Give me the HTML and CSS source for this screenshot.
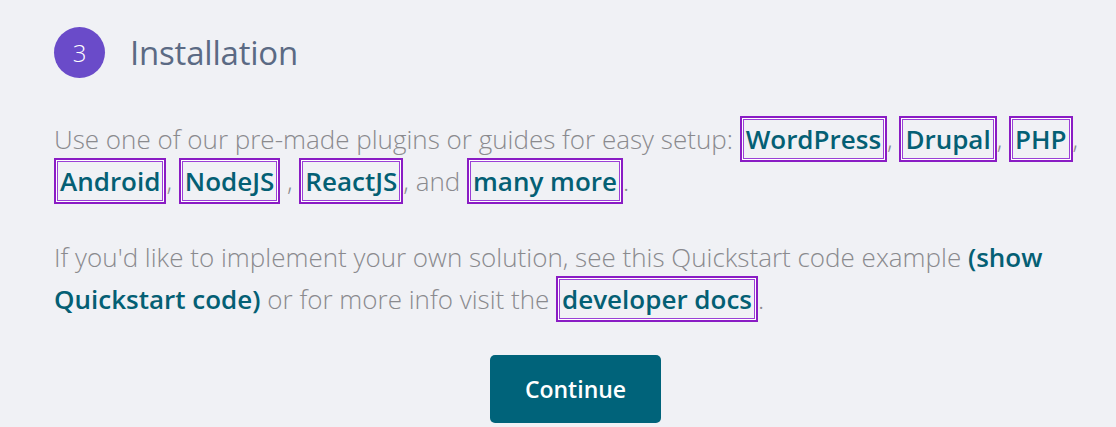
FILE: index.html
```html
<!DOCTYPE html>
<html lang="en">
<head>
<meta charset="utf-8">
<title>Installation</title>
<link rel="stylesheet" href="styles.css">
</head>
<body>
<section class="step">
  <header class="step-header">
    <span class="step-num">3</span>
    <h2 class="step-title">Installation</h2>
  </header>
  <p class="step-text">Use one of our pre-made plugins or guides for easy setup: <a class="link ring" href="#">WordPress</a>, <a class="link ring" href="#">Drupal</a>, <a class="link ring" href="#">PHP</a>, <a class="link ring" href="#">Android</a>, <a class="link ring" href="#">NodeJS</a> , <a class="link ring" href="#">ReactJS</a>, and <a class="link ring" href="#">many more</a>.</p>
  <p class="step-text">If you'd like to implement your own solution, see this Quickstart code example <a class="link" href="#">(show Quickstart code)</a> or for more info visit the <a class="link ring" href="#">developer docs</a>.</p>
  <div class="actions">
    <button class="btn" type="button">Continue</button>
  </div>
</section>
</body>
</html>
```
FILE: styles.css
```css
html, body {
  margin: 0;
  padding: 0;
  background: #f0f1f5;
}
body {
  font-family: "Open Sans", "Noto Sans", sans-serif;
}
.step {
  padding: 27px 19px 0 54px;
}
.step-header {
  display: flex;
  align-items: center;
  gap: 25px;
}
.step-num {
  width: 51px;
  height: 51px;
  border-radius: 50%;
  background: #6a4bc9;
  color: #ffffff;
  font-size: 24px;
  font-weight: 300;
  display: flex;
  align-items: center;
  justify-content: center;
}
.step-title {
  margin: 0;
  font-size: 33px;
  font-weight: 400;
  color: #5b6a84;
  letter-spacing: -0.2px;
}
.step-text {
  margin: 40px 0 0;
  font-size: 26px;
  line-height: 42px;
  font-weight: 300;
  color: #8a8a8e;
}
.step-text + .step-text {
  margin-top: 34px;
}
.link {
  color: #045f74;
  font-weight: 600;
  text-decoration: none;
}
.ring {
  padding: 1px 2px;
  margin: 0 3px;
  border: 1.5px solid #9a3fd6;
  box-shadow: 0 0 0 1px #ffffff;
  outline: 2px solid #8a1cc4;
  outline-offset: 1px;
}
.actions {
  display: flex;
  justify-content: center;
  margin-top: 35px;
}
.btn {
  width: 171px;
  height: 68px;
  border: 0;
  border-radius: 5px;
  background: #00637a;
  color: #ffffff;
  font-family: "Open Sans", "Noto Sans", sans-serif;
  font-size: 23px;
  font-weight: 600;
}
```
